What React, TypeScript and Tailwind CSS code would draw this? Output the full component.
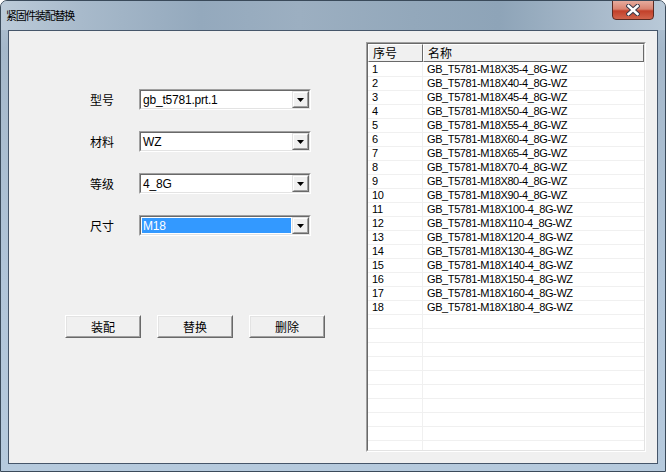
import React from "react";

const cjk = { fontFamily: '"Noto Sans CJK SC", "Liberation Sans", sans-serif' };
const lat = { fontFamily: '"Liberation Sans", "Noto Sans CJK SC", sans-serif' };

function Combo({ value, selected }: { value: string; selected?: boolean }) {
  return (
    <div className="w-[172px] h-[21px] border-t border-l border-t-[#a0a0a0] border-l-[#a0a0a0] border-b border-r border-b-white border-r-white">
      <div className="w-full h-full border-t border-l border-t-[#696969] border-l-[#696969] border-b border-r border-b-[#e3e3e3] border-r-[#e3e3e3] bg-white flex items-stretch">
        <div className="flex-1 flex items-center pl-[1px] pr-[1px] py-[1px]">
          <div
            className={
              "h-full w-full flex items-center pl-[1px] text-[12px] tracking-[-0.2px] leading-none " +
              (selected ? "bg-[#3399ff] text-white" : "text-black")
            }
            style={lat}
          >
            {value}
          </div>
        </div>
        <div className="w-[17px] border-t border-l border-t-[#e3e3e3] border-l-[#e3e3e3] border-b border-r border-b-[#696969] border-r-[#696969]">
          <div className="w-full h-full bg-[#f0f0f0] border-t border-l border-t-white border-l-white border-b border-r border-b-[#a0a0a0] border-r-[#a0a0a0] flex items-center justify-center">
            <svg width="7" height="4" viewBox="0 0 7 4">
              <path d="M0 0H7L3.5 4Z" fill="#000" />
            </svg>
          </div>
        </div>
      </div>
    </div>
  );
}

function Btn({ label }: { label: string }) {
  return (
    <div className="w-[76px] h-[23px] border-t border-l border-t-white border-l-white border-b border-r border-b-[#696969] border-r-[#696969]">
      <div className="w-full h-full bg-[#f0f0f0] border-t border-l border-t-[#e3e3e3] border-l-[#e3e3e3] border-b border-r border-b-[#a0a0a0] border-r-[#a0a0a0] flex items-center justify-center text-[12px] text-black" style={cjk}>
        {label}
      </div>
    </div>
  );
}

const sizes = [35, 40, 45, 50, 55, 60, 65, 70, 80, 90, 100, 110, 120, 130, 140, 150, 160, 180];

export default function App() {
  const rows = Array.from({ length: 28 }, (_, i) => i);
  return (
    <div
      className="w-[666px] h-[472px] relative overflow-hidden rounded-t-[7px] border border-[#3a4a5a] flex flex-col"
      style={{ background: "linear-gradient(180deg,#b3c4d4 0%,#a5b8ca 10%,#b1c5d9 60%,#b6cadd 100%)" }}
    >
      {/* title bar */}
      <div
        className="h-[29px] shrink-0 flex items-center pl-[5px] relative"
        style={{
          background:
            "linear-gradient(90deg,#bccbd9 0%,#a8bacb 12%,#94a9bd 30%,#9cafc1 45%,#93a8bb 62%,#8ea4b8 75%,#a8bacb 90%,#b9c9d8 100%)",
        }}
      >
        <span className="text-[11px] tracking-[-1.3px] text-black" style={cjk}>
          紧固件装配替换
        </span>
        <div
          className="absolute right-[11px] top-[-1px] w-[42px] h-[20px] rounded-b-[4px] border border-[#5a2a22] flex items-center justify-center"
          style={{ background: "linear-gradient(180deg,#e6ab9d 0%,#d98370 45%,#c2402a 55%,#d1644c 100%)" }}
        >
          <svg width="14" height="12" viewBox="0 0 14 12">
            <path d="M2.5 2L11.5 10M11.5 2L2.5 10" stroke="#3a3a4a" strokeWidth="4.5" strokeLinecap="square" />
            <path d="M2.5 2L11.5 10M11.5 2L2.5 10" stroke="#ffffff" strokeWidth="2.5" strokeLinecap="square" />
          </svg>
        </div>
      </div>

      {/* client */}
      <div className="flex-1 mx-[7px] mb-[7px] border border-[#46566a] bg-[#f0f0f0] flex">
        {/* left form */}
        <div className="w-[357px] pl-[81px] pt-[58px] flex flex-col">
          {[
            ["型号", "gb_t5781.prt.1", false],
            ["材料", "WZ", false],
            ["等级", "4_8G", false],
            ["尺寸", "M18", true],
          ].map(([l, v, s], i) => (
            <div key={i} className={"flex items-center h-[21px] " + (i > 0 ? "mt-[21px]" : "")}>
              <div className="w-[49px] text-[12px] text-black" style={cjk}>
                {l as string}
              </div>
              <Combo value={v as string} selected={s as boolean} />
            </div>
          ))}
          <div className="flex gap-[16px] mt-[79px] -ml-[25px]">
            <Btn label="装配" />
            <Btn label="替换" />
            <Btn label="删除" />
          </div>
        </div>

        {/* list */}
        <div className="pt-[11px]">
          <div className="w-[280px] h-[410px] border-t border-l border-t-[#a0a0a0] border-l-[#a0a0a0] border-b border-r border-b-white border-r-white">
            <div className="w-full h-full border-t border-l border-t-[#696969] border-l-[#696969] border-b border-r border-b-[#e3e3e3] border-r-[#e3e3e3] bg-white flex flex-col overflow-hidden">
              <div className="flex h-[18px] shrink-0 text-[12px] text-black" style={cjk}>
                <div className="w-[55px] bg-[#f0f0f0] border-t border-l border-t-white border-l-white border-b border-r border-b-[#696969] border-r-[#696969] flex items-center pl-[4px] leading-none">
                  序号
                </div>
                <div className="flex-1 bg-[#f0f0f0] border-t border-l border-t-white border-l-white border-b border-r border-b-[#696969] border-r-[#696969] flex items-center pl-[4px] leading-none">
                  名称
                </div>
              </div>
              <div className="flex-1 flex flex-col pt-[1px]">
                {rows.map((i) => (
                  <div key={i} className="flex h-[14px] shrink-0 border-b border-[#f0f0f0] text-[11px] tracking-[-0.4px] text-black leading-none" style={lat}>
                    <div className="w-[55px] border-r border-[#f0f0f0] pl-[4px] flex items-center">
                      {i < sizes.length ? String(i + 1) : ""}
                    </div>
                    <div className="flex-1 pl-[4px] flex items-center">
                      {i < sizes.length ? `GB_T5781-M18X${sizes[i]}-4_8G-WZ` : ""}
                    </div>
                  </div>
                ))}
              </div>
            </div>
          </div>
        </div>
      </div>
    </div>
  );
}
